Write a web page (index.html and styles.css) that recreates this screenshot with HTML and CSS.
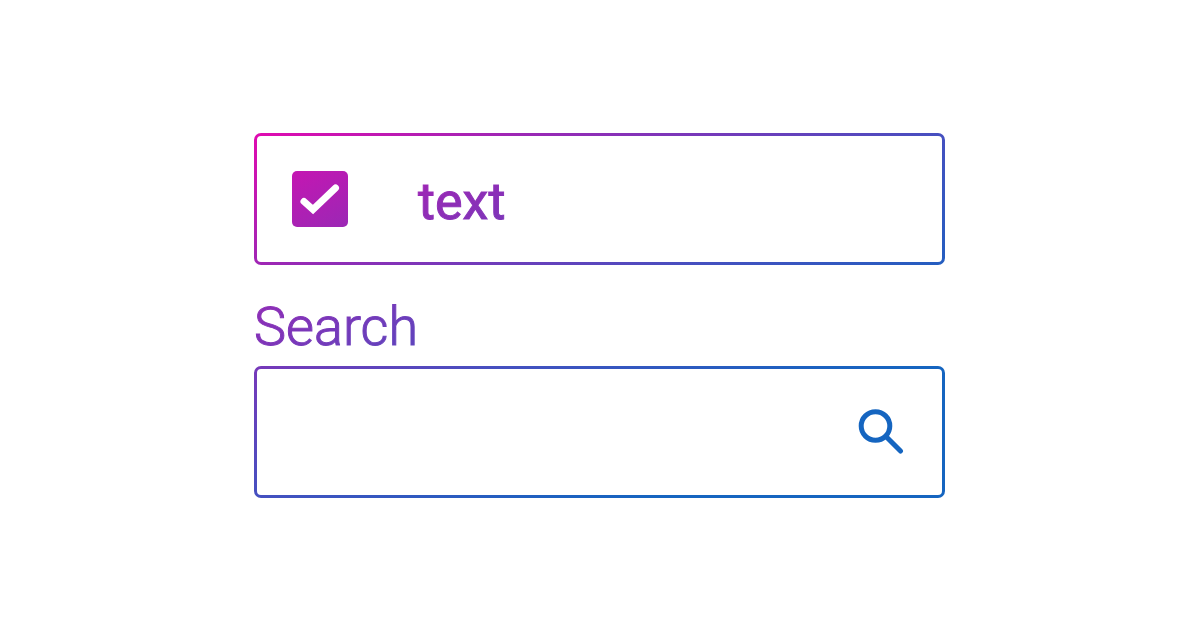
FILE: index.html
```
<!DOCTYPE html>
<html lang="en">
<head>
<meta charset="utf-8">
<meta name="viewport" content="width=device-width, initial-scale=1">
<title>Search</title>
<link rel="stylesheet" href="styles.css">
</head>
<body>
<main class="gradient">
  <form class="form">
    <label class="field option">
      <span class="tick">
        <input class="tick-input" type="checkbox" checked>
        <svg class="tick-mark" viewBox="0 0 56 56" aria-hidden="true"><path d="M12 30.500L21 38.500L43.500 17"/></svg>
      </span>
      <span class="option-text">text</span>
    </label>
    <label class="label" for="search">Search</label>
    <div class="field search">
      <input class="search-input" id="search" type="text">
      <button class="search-button" type="button" aria-label="Search">
        <svg class="search-icon" viewBox="0 0 46 46" aria-hidden="true"><circle cx="17.500" cy="17" r="14.300"/><path d="M28 27.500L42.500 42"/></svg>
      </button>
    </div>
  </form>
</main>
</body>
</html>
```
FILE: styles.css
```
* {
  box-sizing: border-box;
}

body {
  margin: 0;
  min-height: 100vh;
  display: flex;
  align-items: center;
  justify-content: center;
  background: #fff;
  font-family: Roboto, "Liberation Sans", sans-serif;
}

/* One gradient runs through every border, glyph and icon:
   the black ink of the form is screened over it. */
.gradient {
  width: 58%;
  padding: 0 3px;
  isolation: isolate;
  background: linear-gradient(to bottom right, #e10ab0 0%, #9a28b5 20%, #4550c0 50%, #1c61c0 72%, #1565c0 80%);
}

.form {
  display: flex;
  flex-direction: column;
  margin: 0 -3px;
  padding: 0 3px 0 2px;
  background: #fff;
  color: #000;
  mix-blend-mode: screen;
}

.field {
  display: flex;
  align-items: center;
  height: 132px;
  padding: 0 38px 0 35px;
  border: 3px solid #000;
  border-radius: 7px;
}

.option {
  gap: 70px;
}

.tick {
  display: grid;
  width: 56px;
  height: 56px;
}

.tick-input,
.tick-mark {
  grid-area: 1 / 1;
  width: 100%;
  height: 100%;
  margin: 0;
}

.tick-input {
  appearance: none;
  border-radius: 5px;
  background: #000;
}

.tick-mark {
  z-index: 1;
  pointer-events: none;
  fill: none;
  stroke: #fff;
  stroke-width: 7;
  stroke-linecap: round;
}

.option-text {
  padding-top: 6px;
  font-size: 52px;
  line-height: 64px;
  -webkit-text-stroke: 1px #000;
}

.label {
  margin: 30px 0 7px;
  font-size: 54px;
  font-weight: 300;
  line-height: 64px;
  -webkit-text-stroke: 1px #000;
}

.search-input {
  flex: 1;
  min-width: 0;
  height: 100%;
  padding: 0;
  border: 0;
  outline: 0;
  background: none;
  font: inherit;
  font-size: 54px;
}

.search-button {
  display: flex;
  padding: 0;
  border: 0;
  background: none;
}

.search-icon {
  width: 46px;
  height: 46px;
  fill: none;
  stroke: #000;
  stroke-width: 5;
  stroke-linecap: round;
}
```
